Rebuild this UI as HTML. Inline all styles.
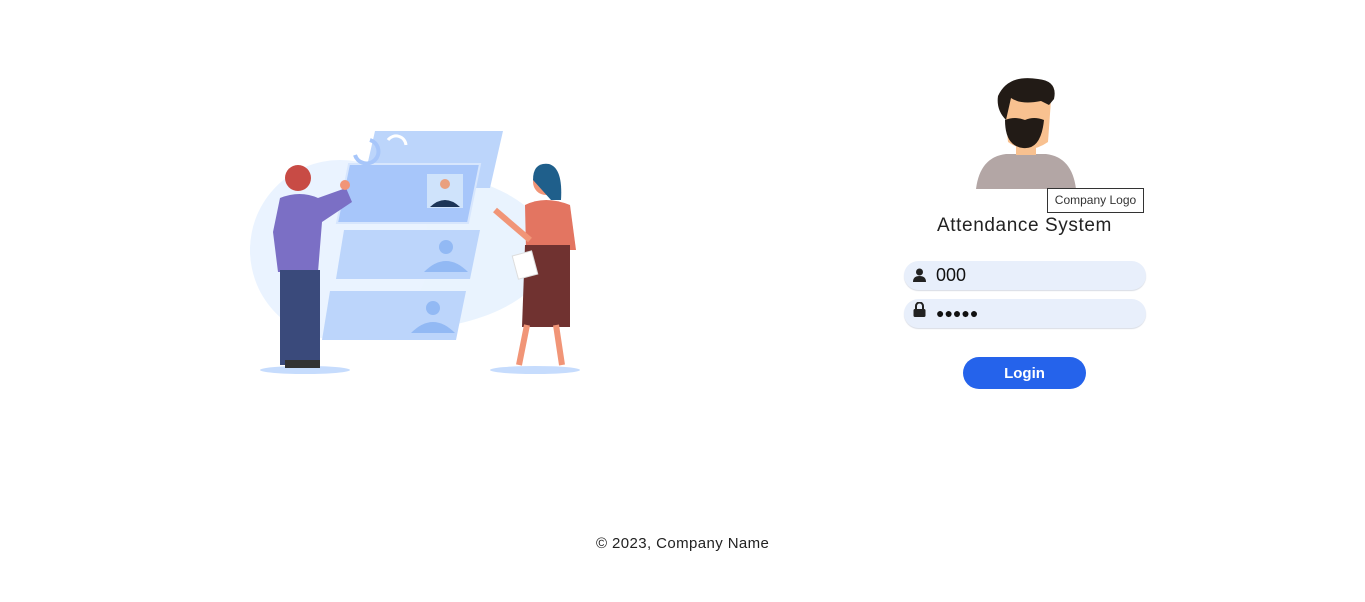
<!DOCTYPE html>
<html><head><meta charset="utf-8"><style>
body{margin:0;width:1365px;height:602px;background:#fff;font-family:"Liberation Sans",sans-serif;position:relative;overflow:hidden}
.abs{position:absolute}
.field{position:absolute;left:904px;width:242px;height:29px;border-radius:15px;background:#e8effb;box-shadow:0 1px 1px #d8dce4}
.field span{position:absolute;left:32px;font-size:18px;color:#111}
</style></head><body>
<svg class="abs" style="left:250px;top:128px" width="340" height="250" viewBox="250 128 340 250">
<ellipse cx="400" cy="250" rx="150" ry="80" fill="#e9f3fe"/>
<circle cx="340" cy="250" r="90" fill="#eaf3ff"/>
<polygon points="375,131 503,131 490,188 362,188" fill="#bcd5fb"/>
<polygon points="349,164 480,164 468,223 337,223" fill="#a7c6fa" stroke="#d7e6fd" stroke-width="2"/>
<rect x="427" y="174" width="36" height="34" fill="#cfe3fb"/>
<circle cx="445" cy="184" r="5" fill="#e9a07f"/><path d="M430 207 q15-14 30 0z" fill="#1d3557"/>
<polygon points="344,230 480,230 470,279 336,279" fill="#bcd5fb"/>
<circle cx="446" cy="247" r="7" fill="#92b9f4"/><path d="M424 272 q22-22 44 0z" fill="#92b9f4"/>
<polygon points="330,291 466,291 456,340 322,340" fill="#bcd5fb"/>
<circle cx="433" cy="308" r="7" fill="#92b9f4"/><path d="M411 333 q22-22 44 0z" fill="#92b9f4"/>
<path d="M370 140 a12 12 0 1 1 -15 15" stroke="#a7c6fa" stroke-width="4" fill="none"/>
<path d="M388 140 a10 10 0 0 1 18 5" stroke="#fff" stroke-width="3" fill="none"/>
<ellipse cx="305" cy="370" rx="45" ry="4" fill="#c6dcfd"/>
<ellipse cx="535" cy="370" rx="45" ry="4" fill="#c6dcfd"/>
<circle cx="298" cy="178" r="13" fill="#c84b45"/>
<path d="M280 198 q20-8 38 0 l28 -10 6 14 -30 20 -4 50 -40 0 -5-40z" fill="#7b6fc5"/>
<rect x="280" y="270" width="40" height="95" fill="#3a4a7b"/>
<rect x="285" y="360" width="35" height="8" fill="#333"/>
<circle cx="345" cy="185" r="5" fill="#f19577"/>
<circle cx="546" cy="182" r="13" fill="#f19577"/><path d="M533 180 q0-18 16-16 q14 4 12 36 l-10 0z" fill="#1f5f8b"/>
<path d="M525 205 q20-10 45 0 l6 45 -50 0z" fill="#e37561"/>
<path d="M495 210 l35 30" stroke="#f19577" stroke-width="6"/>
<path d="M525 245 l45 0 0 82 -48 0z" fill="#703230"/>
<path d="M527 325 l-8 40 M556 325 l6 40" stroke="#f19577" stroke-width="6"/>
<rect x="515" y="253" width="20" height="24" fill="#fff" stroke="#ddd" transform="rotate(-15 525 265)"/>
</svg>
<svg class="abs" style="left:976px;top:78px" width="100" height="111" viewBox="0 0 100 111">
<path d="M0 111 q4-32 30-35 l40 0 q26 3 30 35z" fill="#b3a6a5"/>
<rect x="40" y="55" width="20" height="22" fill="#f8c190"/>
<path d="M28 22 q22-15 47 0 l-3 42 q-20 14-40 0z" fill="#f8c190"/>
<path d="M29 42 q0 26 18 28 q18 2 21-28 q-10-4-19 0 q-10-4-20 0z" fill="#221b16"/>
<path d="M22 18 q10-22 40-17 q20 2 16 20 l-5 6 -8-4 q-20 4-30-3 l-5 22 q-10-10-8-24z" fill="#221b16"/>
</svg>
<div class="abs" style="left:1047px;top:188px;width:95px;height:23px;border:1px solid #333;background:#fff;font-size:12px;line-height:23px;text-align:center;color:#333">Company Logo</div>
<div class="abs" style="left:937px;top:215px;font-size:19px;letter-spacing:0.6px;color:#222">Attendance System</div>
<div class="field" style="top:261px"><svg class="abs" style="left:9px;top:7px" width="13" height="14" viewBox="0 0 13 14"><circle cx="6.5" cy="4" r="3.5" fill="#222"/><path d="M0 14 q0-6 6.5-6 q6.5 0 6.5 6z" fill="#222"/></svg><span style="top:4px">000</span></div>
<div class="field" style="top:299px"><svg class="abs" style="left:9px;top:3px" width="13" height="15" viewBox="0 0 13 15"><path d="M3 7 v-3 a3.5 3.5 0 0 1 7 0 v3" stroke="#222" stroke-width="2" fill="none"/><rect x="0.5" y="7" width="12" height="8" rx="1.5" fill="#222"/></svg><span style="top:6px;font-size:14px;letter-spacing:0px">●●●●●</span></div>
<div class="abs" style="left:963px;top:357px;width:123px;height:32px;border-radius:16px;background:#2563eb;color:#fff;font-weight:bold;font-size:15px;line-height:34px;text-align:center">Login</div>
<div class="abs" style="left:596px;top:535px;font-size:15px;letter-spacing:0.4px;color:#222">© 2023, Company Name</div>
</body></html>
